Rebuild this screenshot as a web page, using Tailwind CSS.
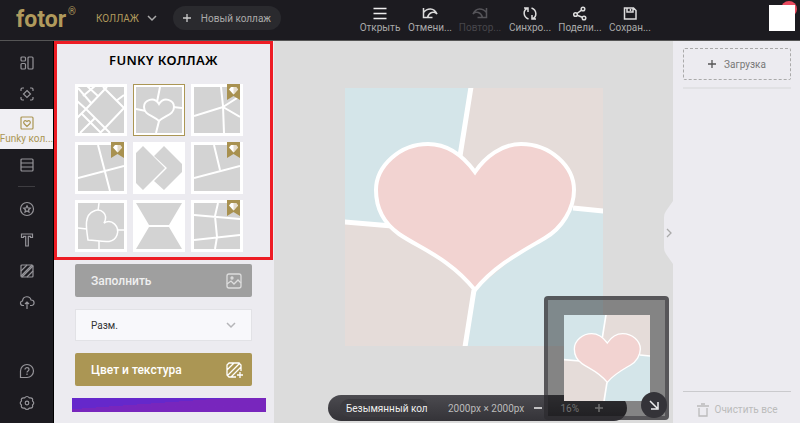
<!DOCTYPE html>
<html lang="ru">
<head>
  <meta charset="UTF-8" />
  <meta name="viewport" content="width=device-width, initial-scale=1.0" />
  <title>Fotor - Funky коллаж</title>
  <script src="https://cdn.jsdelivr.net/npm/@tailwindcss/browser@4"></script>
</head>
<body class="flex h-screen flex-col overflow-hidden bg-[#1c1b20] font-['Roboto','Noto_Sans',sans-serif] text-[10px]">

  <!-- Shared drawings -->
  <svg class="hidden">
    <symbol id="collage" viewBox="0 0 258 258">
      <path fill="#d4e5e9" d="M0 0h258v258H0z"/>
      <path fill="#e5dcd9" d="M126 0h132v122l-30-2-98 82-10 56H0V134l46 4 69-71z"/>
      <path fill="none" stroke="#fff" stroke-width="5" d="M126-1 115 68M228 120l31 3M-1 134l48 4M129 202l-9 57"/>
      <path fill="#f2d3d1" stroke="#fff" stroke-width="4" d="M130 84C119 69 103 56 83 56C55 56 31 78 31 102C31 121 40 136 54 146C76 161 104 170 130 202C150 177 178 163 200 150C217 140 229 121 229 102C229 78 205 56 176 56C157 56 140 69 130 84Z"/>
    </symbol>
    <symbol id="ribbon" viewBox="0 0 13 16">
      <path fill="#a89150" d="M0 0h13v16l-6.500-4L0 16z"/>
      <path fill="#fff" d="M4 3h5l2 2.500L6.500 10.500 2 5.500z"/>
      <path fill="#e5dccb" d="M6.500 3H9l2 2.500-4.500 5z"/>
    </symbol>
  </svg>

  <!-- Header -->
  <header class="flex h-[41px] shrink-0 border-b border-[#555] text-[#aaa]">
    <div class="flex w-[355px] shrink-0 items-start pl-4">
      <a href="#" class="flex w-[60px] items-start text-[#b09a5c]">
        <span class="text-[23px] leading-10 font-bold">fotor</span>
        <span class="pt-1 pl-0.5 leading-4">®</span>
      </a>
      <button class="mt-2 ml-5 flex h-5 items-center gap-2 text-[#b09a5c]">
        КОЛЛАЖ
        <svg class="h-2 w-2.5" viewBox="0 0 10 8" fill="none" stroke="#aaa" stroke-width="1.500"><path d="m1 2 4 4 4-4"/></svg>
      </button>
      <button class="mt-1.5 ml-4 flex h-6 w-[108px] items-center justify-center gap-2.5 rounded-full bg-[#2a2a2e]">
        <svg class="h-2 w-2" viewBox="0 0 8 8" stroke="#ccc" stroke-width="1.300"><path d="M4 0v8M0 4h8"/></svg>
        Новый коллаж
      </button>
    </div>
    <nav class="flex">
      <button class="flex w-[50px] flex-col items-center pt-1.5 leading-3">
        <svg class="h-4 w-4" viewBox="0 0 16 16" fill="none" stroke="#eee" stroke-width="1.500"><path d="M1.500 2.500h13M1.500 7.500h13M1.500 12.500h13"/></svg>
        Открыть
      </button>
      <button class="flex w-[50px] flex-col items-center pt-1.5 leading-3">
        <svg class="h-4 w-4" viewBox="0 0 16 16" fill="none" stroke="#ddd" stroke-width="1.500"><path d="M1.500 2v9.500h9M1.500 6.500C5 2 12 1 15 8C12 5 7 6 5.500 11.500"/></svg>
        Отмени...
      </button>
      <button class="flex w-[50px] flex-col items-center pt-1.5 leading-3 text-[#47464b]" disabled>
        <svg class="h-4 w-4" viewBox="0 0 16 16" fill="none" stroke="#555459" stroke-width="1.500"><path d="M14.500 2v9.500h-9M14.500 6.500C11 2 4 1 1 8C4 5 9 6 10.500 11.500"/></svg>
        Повтор...
      </button>
      <button class="flex w-[50px] flex-col items-center pt-1.5 leading-3">
        <svg class="h-4 w-4" viewBox="0 0 16 16" fill="none" stroke="#ddd" stroke-width="1.500"><path d="M6.500 13C1 11 1 4.500 5 2.500M2 2h4v4M9.500 2C15 4 15 10.500 11 12.500M14 13h-4V9"/></svg>
        Синхро...
      </button>
      <button class="flex w-[50px] flex-col items-center pt-1.5 leading-3">
        <svg class="h-4 w-4" viewBox="0 0 16 16" fill="none" stroke="#ddd" stroke-width="1.500"><circle cx="3.500" cy="8.500" r="1.800"/><circle cx="11" cy="3" r="1.800"/><circle cx="12" cy="12" r="1.800"/><path d="m5 7.500 4.500-3.300M5.200 9.200l5 2"/></svg>
        Подели...
      </button>
      <button class="flex w-[50px] flex-col items-center pt-1.5 leading-3">
        <svg class="h-4 w-4" viewBox="0 0 16 16" fill="none" stroke="#ddd" stroke-width="1.500"><path d="M2.500 2h9l2.500 2.500V13H2.500zM5 2v4h6V2M8.500 3v2"/></svg>
        Сохран...
      </button>
    </nav>
    <div class="relative mt-[5px] mr-[5px] ml-auto h-[26px] w-[26px]">
      <span class="absolute -top-1 -right-0.5 h-4 w-4 rounded-full bg-[#e84a5f]"></span>
      <span class="absolute inset-0 bg-white"></span>
    </div>
  </header>

  <div class="flex min-h-0 flex-1">

    <!-- Side menu -->
    <aside class="flex w-[54px] shrink-0 flex-col border-r border-black pt-1.5 pb-1">
      <button class="flex h-[31px] items-center justify-center" aria-label="Классический">
        <svg class="h-4 w-4" viewBox="0 0 16 16" fill="none" stroke="#96959a" stroke-width="1.200"><rect x="2" y="2" width="4.500" height="4" rx="1"/><rect x="2" y="8.500" width="4.500" height="5.500" rx="1"/><rect x="9" y="2" width="5" height="12" rx="1"/></svg>
      </button>
      <button class="flex h-[31px] items-center justify-center" aria-label="Художественный">
        <svg class="h-4 w-4" viewBox="0 0 16 16" fill="none" stroke="#96959a" stroke-width="1.200"><path d="M2 5V3l1-1h2M11 2h2l1 1v2M14 11v2l-1 1h-2M5 14H3l-1-1v-2"/><path d="m8 4.500 3.500 3.500L8 11.500 4.500 8z"/></svg>
      </button>
      <button class="flex h-10 flex-col items-center bg-[#f0eff3] pt-1.5 whitespace-nowrap text-[#ab9654]">
        <svg class="h-4 w-4 shrink-0" viewBox="0 0 16 16" fill="none" stroke="#ab9654" stroke-width="1.200"><rect x="2" y="2" width="12" height="12" rx="1"/><path d="M8 11.500 5 8.500C4 7 5.500 4.500 8 6.500C10.500 4.500 12 7 11 8.500Z"/></svg>
        <span class="leading-4">Funky кол...</span>
      </button>
      <button class="flex h-[31px] items-center justify-center" aria-label="Сшивка">
        <svg class="h-4 w-4" viewBox="0 0 16 16" fill="none" stroke="#96959a" stroke-width="1.200"><rect x="2" y="2" width="12" height="12" rx="1"/><path d="M2 6h12M2 10h12"/></svg>
      </button>
      <hr class="mx-[18px] my-1.5 border-[#3e3d41]" />
      <button class="flex h-[31px] items-center justify-center" aria-label="Стикеры">
        <svg class="h-4 w-4" viewBox="0 0 16 16" fill="none" stroke="#96959a" stroke-width="1.200"><circle cx="8" cy="8" r="6.500"/><path d="m8 4.800 1 2.100 2.300.3-1.700 1.600.4 2.300-2-1.100-2 1.100.4-2.300L4.700 7.200 7 6.900z"/></svg>
      </button>
      <button class="flex h-[31px] items-center justify-center" aria-label="Текст">
        <svg class="h-4 w-4" viewBox="0 0 16 16" fill="none" stroke="#96959a" stroke-width="1.200"><path d="M2.500 2h11v3.500h-2V4.300H9.300V14H6.700V4.300H4.500v1.200h-2z"/></svg>
      </button>
      <button class="flex h-[31px] items-center justify-center" aria-label="Фон">
        <svg class="h-4 w-4" viewBox="0 0 16 16" fill="none" stroke="#96959a" stroke-width="1.200"><rect x="2" y="2" width="12" height="12" rx="1"/><path d="m2 8 6-6M2 13 13 2M3 14 14 3M8 14l6-6"/></svg>
      </button>
      <button class="flex h-[31px] items-center justify-center" aria-label="Облако">
        <svg class="h-4 w-4" viewBox="0 0 16 16" fill="none" stroke="#96959a" stroke-width="1.200"><path d="M5 11.500H4C1 11.500.500 7.500 3.500 7C4 1.500 11 1.500 12 6C16 6 16 11.500 12.500 11.500H11M8 15V8M6 10l2-2 2 2"/></svg>
      </button>
      <button class="mt-auto flex h-8 items-center justify-center" aria-label="Помощь">
        <svg class="h-4 w-4" viewBox="0 0 16 16" fill="none" stroke="#96959a" stroke-width="1.200"><path d="M1.500 14.500V8a6.500 6.500 0 1 1 6.500 6.500z"/><path d="M6 6.500C6 4 10 4 10 6.500C10 8 8 7.800 8 9.500M8 10.500V12"/></svg>
      </button>
      <button class="flex h-8 items-center justify-center" aria-label="Настройки">
        <svg class="h-4 w-4" viewBox="0 0 16 16" fill="none" stroke="#96959a" stroke-width="1.200" stroke-linejoin="round"><path d="M5.500 3Q8 0 10.500 3Q14.500 2.500 13.500 6Q16 8 13.500 10Q14.500 13.500 10.500 13Q8 16 5.500 13Q1.500 13.500 2.500 10Q0 8 2.500 6Q1.500 2.500 5.500 3Z"/><circle cx="8" cy="8" r="1.800"/></svg>
      </button>
    </aside>

    <!-- Templates -->
    <div class="flex w-[220px] shrink-0 flex-col bg-[#ecebf0]">
      <section class="mr-px border-3 border-[#ed1c24] px-[18px] pb-[5px]">
        <h1 class="pt-1 pb-2 text-center font-['Noto_Sans',sans-serif] text-[13px] leading-6 font-semibold tracking-wide text-black">FUNKY КОЛЛАЖ</h1>
        <div class="mt-1 grid grid-cols-[repeat(3,52px)] gap-1.5">
          <button class="h-[52px] bg-white p-[3px]" aria-label="Шаблон 1">
            <svg viewBox="0 0 46 46" fill="none" stroke="#fff" stroke-width="2"><path fill="#d3d3d3" stroke="none" d="M0 0h46v46H0z"/><path d="M8 22 27 2l19 19-19 20zM25 0l2 2 2-2M27 41l-5 5M27 41l5 5M-1 14l9 8-9 9M0 1l13 15M9-1l11 10M17-1 5 9M46 8l-8 6M4 27l19 19M17 31 2 46"/></svg>
          </button>
          <button class="h-[52px] border border-[#ab9654] bg-white p-0.5" aria-label="Шаблон 2">
            <svg viewBox="0 0 46 46" fill="#d3d3d3" stroke="#fff" stroke-width="2"><path stroke="none" d="M0 0h46v46H0z"/><path d="m24 0-3 15M0 22l10 2M37 20l9 1M23 34l-3 12"/><path d="M23 17C18 9 8 13 8 20C8 28 17 28 23 34C29 28 38 28 38 20C38 13 28 9 23 17Z"/></svg>
          </button>
          <button class="relative h-[52px] bg-white p-[3px]" aria-label="Шаблон 3">
            <svg viewBox="0 0 46 46" fill="#d3d3d3" stroke="#fff" stroke-width="2"><path stroke="none" d="M0 0h46v46H0z"/><path d="m27 0 2 19 1 27M29 20 0 29M29 20l17-11M29 20l17 10"/></svg>
            <svg class="absolute top-0 right-[3px] h-4 w-[13px]"><use href="#ribbon"/></svg>
          </button>
          <button class="relative h-[52px] bg-white p-[3px]" aria-label="Шаблон 4">
            <svg viewBox="0 0 46 46" fill="#d3d3d3" stroke="#fff" stroke-width="2"><path stroke="none" d="M0 0h46v46H0z"/><path d="m20 0 12 46M0 33l46-12"/></svg>
            <svg class="absolute top-0 right-[3px] h-4 w-[13px]"><use href="#ribbon"/></svg>
          </button>
          <button class="h-[52px] bg-white p-[3px]" aria-label="Шаблон 5">
            <svg viewBox="0 0 46 46" fill="#d3d3d3"><path d="m0 8 7-7 22 22L7 45l-7-7zM18 11 28 1l18 18v8L28 45 18 36l13-13z"/></svg>
          </button>
          <button class="relative h-[52px] bg-white p-[3px]" aria-label="Шаблон 6">
            <svg viewBox="0 0 46 46" fill="#d3d3d3" stroke="#fff" stroke-width="2"><path stroke="none" d="M0 0h46v46H0z"/><path d="m20 0 6 25M0 33l46-12"/></svg>
            <svg class="absolute top-0 right-[3px] h-4 w-[13px]"><use href="#ribbon"/></svg>
          </button>
          <button class="h-[52px] bg-white p-[3px]" aria-label="Шаблон 7">
            <svg viewBox="0 0 46 46" fill="#d3d3d3" stroke="#fff" stroke-width="1.500"><path stroke="none" d="M0 0h46v46H0z"/><path d="m21 0-1 8M0 25l9 1M40 27h6M21 38v8"/><path d="M26 20C31 11 23 5 16 8C6 12 8 24 10 37C21 37 35 43 39 32C42 24 34 15 26 20Z"/></svg>
          </button>
          <button class="h-[52px] bg-white p-[3px]" aria-label="Шаблон 8">
            <svg viewBox="0 0 46 46" fill="#d3d3d3"><path d="M0 0h46L33 22H13zM13 24h20l13 22H0z"/></svg>
          </button>
          <button class="relative h-[52px] bg-white p-[3px]" aria-label="Шаблон 9">
            <svg viewBox="0 0 46 46" fill="#d3d3d3" stroke="#fff" stroke-width="2"><path stroke="none" d="M0 0h46v46H0z"/><path fill="none" d="m24 0-3 13 2 21-2 12M0 12l46 4M0 37l46-5"/></svg>
            <svg class="absolute top-0 right-[3px] h-4 w-[13px]"><use href="#ribbon"/></svg>
          </button>
        </div>
      </section>

      <div class="flex flex-col gap-3 px-[21px] pt-1 text-[12px]">
        <button class="flex h-[33px] w-[177px] items-center justify-between rounded-xs bg-[#9f9f9f] pr-2 pl-4 font-medium text-[#efefef]">
          Заполнить
          <svg class="h-5 w-5" viewBox="0 0 20 20" fill="none" stroke="#ddd" stroke-width="1.300"><rect x="3" y="3" width="14" height="14" rx="2"/><circle cx="8" cy="7" r="1"/><path d="m3 13 4-3 3 3 4-4 3 3"/></svg>
        </button>
        <div class="relative w-[177px]">
          <select class="block h-8 w-full appearance-none border border-[#e2e2e6] bg-[#f8f8fb] pl-[15px] text-[10px] text-[#333]" aria-label="Размер">
            <option>Разм.</option>
          </select>
          <svg class="pointer-events-none absolute top-3 right-4 h-2 w-2.5" viewBox="0 0 10 8" fill="none" stroke="#b5b5b8" stroke-width="1.500"><path d="m1 2 4 4 4-4"/></svg>
        </div>
        <button class="flex h-[33px] w-[177px] items-center justify-between rounded-xs bg-[#ab9654] pr-2 pl-4 font-medium text-white">
          Цвет и текстура
          <svg class="h-5 w-5" viewBox="0 0 20 20" fill="none" stroke="#fff" stroke-width="1.300"><path d="M12 17H5l-2-2V5l2-2h10l2 2v6M3 10l7-7M3 16 16 3M7 17l10-10M16 12v6M13 15h6"/></svg>
        </button>
      </div>
      <div class="mt-3 mr-2 ml-[18px] h-3.5 shrink-0 bg-linear-to-br from-[#6528cb] from-40% to-[#7826bd] to-40%"></div>
    </div>

    <!-- Canvas -->
    <main class="relative flex flex-1 flex-col items-center bg-[#dcdcdc] pt-[47px] pb-0.5">
      <svg class="h-[258px] w-[258px] shrink-0"><use href="#collage"/></svg>
      <div class="mt-auto mr-[46px] ml-[54px] flex h-[26px] items-center self-stretch rounded-full bg-linear-to-b from-[#4c4b50] to-[#343338] px-3 text-[#bbb]">
        <input class="h-[18px] w-[88px] rounded-full bg-[#3c3b40] pl-1.5 text-[#eee]" value="Безымянный коллаж" aria-label="Название" />
        <span class="ml-5 whitespace-nowrap">2000px × 2000px</span>
        <button class="ml-2.5 shrink-0" aria-label="Уменьшить">
          <svg class="h-2 w-2" viewBox="0 0 8 8" stroke="#eee" stroke-width="1.500"><path d="M0 4h8"/></svg>
        </button>
        <span class="ml-auto">16%</span>
        <button class="mr-3 ml-4" aria-label="Увеличить">
          <svg class="h-2 w-2" viewBox="0 0 8 8" stroke="#bbb" stroke-width="1.500"><path d="M0 4h8M4 0v8"/></svg>
        </button>
      </div>

      <!-- Navigator -->
      <div class="absolute right-1 bottom-[3px] h-[124px] w-[125px] rounded-sm border-4 border-[#38373c]/60 bg-black/40 px-4 pt-[15px]">
        <svg class="h-[86px] w-[86px]"><use href="#collage"/></svg>
        <button class="absolute -right-0.5 -bottom-0.5 flex h-[26px] w-[26px] items-center justify-center rounded-full bg-[#343338]" aria-label="Свернуть">
          <svg class="h-2.5 w-2.5" viewBox="0 0 10 10" fill="none" stroke="#eee" stroke-width="1.500"><path d="m1 1 7 7M9 2v7H2"/></svg>
        </button>
      </div>
    </main>

    <!-- Uploads -->
    <aside class="relative flex w-[127px] shrink-0 flex-col bg-[#ecebf0] pt-[7px] pr-[9px] pl-2.5">
      <button class="flex h-8 shrink-0 items-center justify-center gap-2 rounded-xs border border-dashed border-[#aaa] text-[#777]">
        <svg class="h-2 w-2" viewBox="0 0 8 8" stroke="#555" stroke-width="1.300"><path d="M4 0v8M0 4h8"/></svg>
        Загрузка
      </button>
      <hr class="mt-[7px] border-t-2 border-[#e1e1e4]" />
      <button class="mt-auto flex h-8 shrink-0 items-center justify-center gap-1.5 border-t border-[#cacacd] pt-1 text-[#bbb]">
        <svg class="h-3.5 w-3" viewBox="0 0 12 14" fill="none" stroke="#bbb" stroke-width="1.300"><path d="M0 3h12M4 1h4M2 5v8h8V5"/></svg>
        Очистить все
      </button>
      <button class="absolute top-40 -left-[9px] h-[63px] w-[9px]" aria-label="Свернуть панель">
        <svg class="h-[63px] w-[9px]" viewBox="0 0 9 63"><path fill="#ecebf0" d="M9 0v63L2 53Q0 50 0 47V16Q0 13 2 10z"/><path d="m3 28 4 4-4 4" fill="none" stroke="#aaa" stroke-width="1.300"/></svg>
      </button>
    </aside>
  </div>

</body>
</html>
